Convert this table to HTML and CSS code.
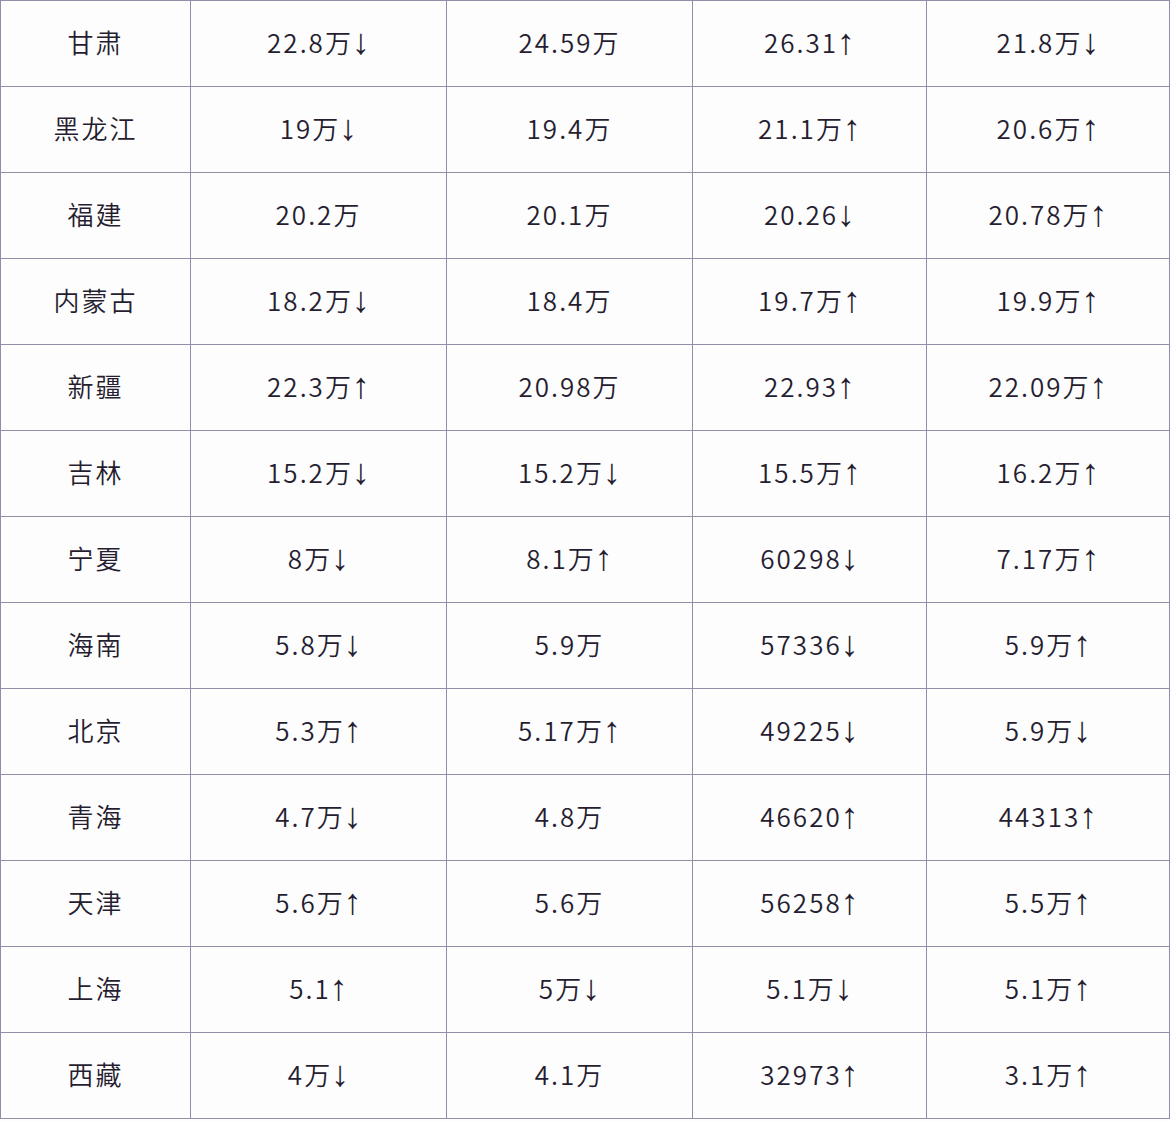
FILE: index.html
```html
<!DOCTYPE html>
<html lang="zh-CN">
<head>
<meta charset="utf-8">
<link rel="stylesheet" href="styles.css">
</head>
<body>
<div class="grid">
<div class="c">甘肃</div><div class="c">22.8万<span class="ar">↓</span></div><div class="c">24.59万</div><div class="c">26.31<span class="ar">↑</span></div><div class="c">21.8万<span class="ar">↓</span></div>
<div class="c">黑龙江</div><div class="c">19万<span class="ar">↓</span></div><div class="c">19.4万</div><div class="c">21.1万<span class="ar">↑</span></div><div class="c">20.6万<span class="ar">↑</span></div>
<div class="c">福建</div><div class="c">20.2万</div><div class="c">20.1万</div><div class="c">20.26<span class="ar">↓</span></div><div class="c">20.78万<span class="ar">↑</span></div>
<div class="c">内蒙古</div><div class="c">18.2万<span class="ar">↓</span></div><div class="c">18.4万</div><div class="c">19.7万<span class="ar">↑</span></div><div class="c">19.9万<span class="ar">↑</span></div>
<div class="c">新疆</div><div class="c">22.3万<span class="ar">↑</span></div><div class="c">20.98万</div><div class="c">22.93<span class="ar">↑</span></div><div class="c">22.09万<span class="ar">↑</span></div>
<div class="c">吉林</div><div class="c">15.2万<span class="ar">↓</span></div><div class="c">15.2万<span class="ar">↓</span></div><div class="c">15.5万<span class="ar">↑</span></div><div class="c">16.2万<span class="ar">↑</span></div>
<div class="c">宁夏</div><div class="c">8万<span class="ar">↓</span></div><div class="c">8.1万<span class="ar">↑</span></div><div class="c">60298<span class="ar">↓</span></div><div class="c">7.17万<span class="ar">↑</span></div>
<div class="c">海南</div><div class="c">5.8万<span class="ar">↓</span></div><div class="c">5.9万</div><div class="c">57336<span class="ar">↓</span></div><div class="c">5.9万<span class="ar">↑</span></div>
<div class="c">北京</div><div class="c">5.3万<span class="ar">↑</span></div><div class="c">5.17万<span class="ar">↑</span></div><div class="c">49225<span class="ar">↓</span></div><div class="c">5.9万<span class="ar">↓</span></div>
<div class="c">青海</div><div class="c">4.7万<span class="ar">↓</span></div><div class="c">4.8万</div><div class="c">46620<span class="ar">↑</span></div><div class="c">44313<span class="ar">↑</span></div>
<div class="c">天津</div><div class="c">5.6万<span class="ar">↑</span></div><div class="c">5.6万</div><div class="c">56258<span class="ar">↑</span></div><div class="c">5.5万<span class="ar">↑</span></div>
<div class="c">上海</div><div class="c">5.1<span class="ar">↑</span></div><div class="c">5万<span class="ar">↓</span></div><div class="c">5.1万<span class="ar">↓</span></div><div class="c">5.1万<span class="ar">↑</span></div>
<div class="c">西藏</div><div class="c">4万<span class="ar">↓</span></div><div class="c">4.1万</div><div class="c">32973<span class="ar">↑</span></div><div class="c">3.1万<span class="ar">↑</span></div>
</div>
</body>
</html>
```
FILE: styles.css
```css
html, body {
  margin: 0;
  padding: 0;
  background: #fdfdfe;
}
.grid {
  display: grid;
  grid-template-columns: 190px 256px 246px 234px 243px;
  grid-auto-rows: 86px;
  width: 1169px;
  border-left: 1px solid #948ca8;
  border-top: 1px solid #948ca8;
}
.c {
  box-sizing: border-box;
  border-right: 1px solid #948ca8;
  border-bottom: 1px solid #948ca8;
  display: flex;
  align-items: center;
  justify-content: center;
  font-family: "Noto Sans CJK SC", "Noto Sans", sans-serif;
  font-size: 26px;
  font-weight: 350;
  letter-spacing: 2px;
  color: #261e30;
  line-height: 1;
  padding-bottom: 3px;
}
.ar {
  font-family: "Liberation Sans", sans-serif;
  font-size: 36px;
  font-weight: 400;
  letter-spacing: 0;
  margin-left: -1px;
}
```
